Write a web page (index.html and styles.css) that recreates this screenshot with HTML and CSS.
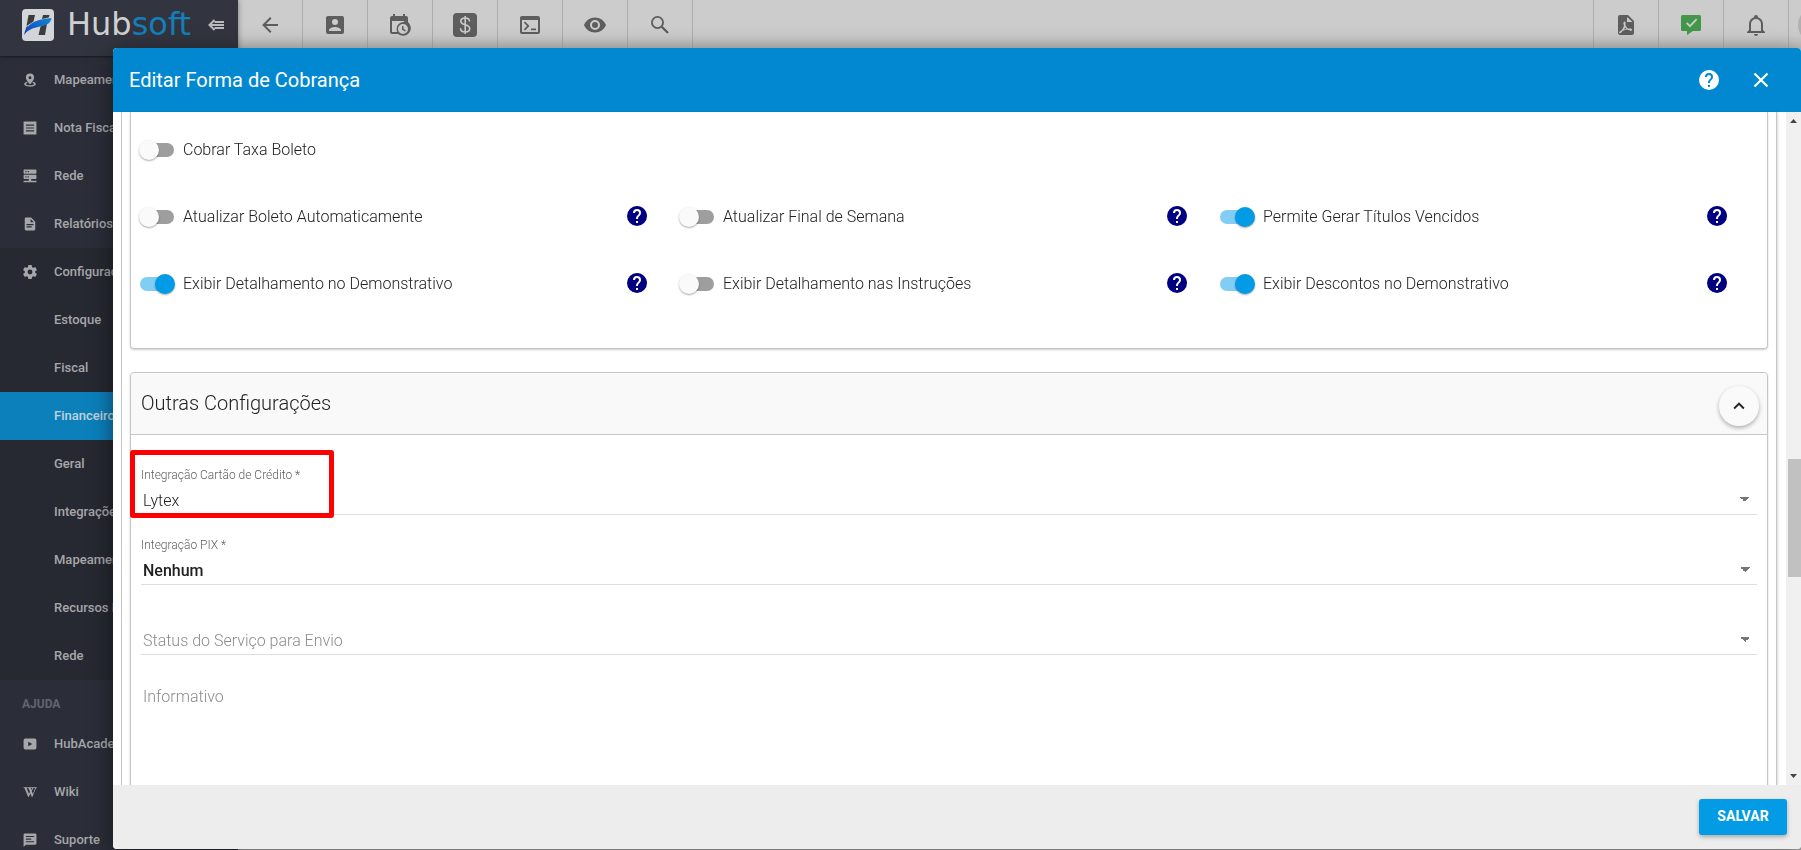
FILE: index.html
```html
<!DOCTYPE html>
<html lang="pt-BR">
<head>
<meta charset="utf-8">
<title>Hubsoft - Editar Forma de Cobrança</title>
<link rel="stylesheet" href="styles.css">
</head>
<body>
<svg class="defs" aria-hidden="true">
  <symbol id="help" viewBox="0 0 24 24"><path d="M15.07,11.25L14.17,12.17C13.45,12.89 13,13.5 13,15H11V14.5C11,13.39 11.45,12.39 12.17,11.67L13.41,10.41C13.78,10.05 14,9.55 14,9C14,7.89 13.1,7 12,7A2,2 0 0,0 10,9H8A4,4 0 0,1 12,5A4,4 0 0,1 16,9C16,9.88 15.64,10.67 15.07,11.25M13,19H11V17H13M12,2A10,10 0 0,0 2,12A10,10 0 0,0 12,22A10,10 0 0,0 22,12C22,6.47 17.5,2 12,2Z"/></symbol>
</svg>

<div class="app">
  <aside class="sidebar">
    <div class="brand">
      <svg class="brand-mark" viewBox="0 0 32 32">
        <defs><linearGradient id="wing" x1="0" y1="1" x2="1" y2="0"><stop offset="0" stop-color="#0a3fc4"/><stop offset="1" stop-color="#1689cf"/></linearGradient></defs>
        <rect width="32" height="32" rx="4" fill="#d3d5d8"/>
        <path fill="#3b3c3e" d="M6.500 6H13l-1.500 6.500L4.500 17zM21 6h6.500l-.700 2.500-6.800 1.500zM4 18.500l2.500-2-2 6-1.500 2zM18.500 17.500l6.500-3L23 26h-6.500z"/>
        <path fill="url(#wing)" d="M2 26C3.500 16.500 12 10 29.500 9c-.500 4-3.500 6.500-7.500 7.500C13.500 18.500 6.500 19.500 2 26z"/>
      </svg>
      <span class="brand-name">Hub<span class="brand-accent">soft</span></span>
      <button class="collapse" aria-label="Recolher menu"><svg viewBox="0 0 17 12"><path fill="none" stroke="currentColor" stroke-width="2" d="M6.500 1 1.500 6l5 5M2 6h14M6.500 3H16M6.500 9H16"/></svg></button>
    </div>
    <nav class="nav">
      <a class="item" href="#"><svg viewBox="0 0 24 24"><path d="M12 1a7 7 0 0 0-7 7c0 4.500 7 11.500 7 11.500S19 12.500 19 8a7 7 0 0 0-7-7m0 4.500A2.500 2.500 0 1 1 12 10.500 2.500 2.500 0 0 1 12 5.500M6.500 15C3.500 16 2 17.500 2 19c0 2.500 4.500 4.500 10 4.500s10-2 10-4.500c0-1.500-1.500-3-4.500-4l-1.300 2c1.800.500 2.800 1.200 2.800 2 0 1.200-3 2.200-7 2.200s-7-1-7-2.200c0-.800 1-1.500 2.800-2z"/></svg><span>Mapeamento</span></a>
      <a class="item" href="#"><svg viewBox="0 0 24 24"><path fill-rule="evenodd" d="M1 1h22v22H1zM5 6v2h14V6zm0 5v2h14v-2zm0 5v2h14v-2z"/></svg><span>Nota Fiscal</span></a>
      <a class="item" href="#"><svg viewBox="0 0 24 24"><path fill-rule="evenodd" d="M2 1h20a1 1 0 0 1 1 1v5a1 1 0 0 1-1 1H2a1 1 0 0 1-1-1V2a1 1 0 0 1 1-1m2 2.500v2h2v-2zm4 0v2h2v-2zM2 10h20a1 1 0 0 1 1 1v5a1 1 0 0 1-1 1h-8v3h9v2.500H1V20h9v-3H2a1 1 0 0 1-1-1v-5a1 1 0 0 1 1-1m2 2.500v2h2v-2zm4 0v2h2v-2z"/></svg><span>Rede</span></a>
      <a class="item" href="#"><svg viewBox="0 0 24 24"><path d="M13,9H18.5L13,3.5V9M5,1H14L21,8V21A2,2 0 0,1 19,23H5C3.890,23 3,22.100 3,21V3C3,1.890 3.890,1 5,1M15,18V16H6V18H15M18,14V12H6V14H18Z"/></svg><span>Relatórios</span></a>
      <div class="group">
        <a class="item" href="#"><svg viewBox="2 2 20 20"><path d="M12,15.5A3.5,3.5 0 0,1 8.5,12A3.5,3.5 0 0,1 12,8.5A3.5,3.5 0 0,1 15.5,12A3.5,3.5 0 0,1 12,15.5M19.43,12.97C19.47,12.65 19.5,12.33 19.5,12C19.5,11.67 19.47,11.34 19.43,11L21.54,9.37C21.73,9.22 21.78,8.95 21.66,8.73L19.66,5.27C19.54,5.05 19.27,4.96 19.05,5.05L16.56,6.05C16.04,5.66 15.5,5.32 14.87,5.07L14.5,2.42C14.46,2.18 14.25,2 14,2H10C9.75,2 9.54,2.18 9.5,2.42L9.13,5.07C8.5,5.32 7.96,5.66 7.44,6.05L4.95,5.05C4.73,4.96 4.46,5.05 4.34,5.27L2.34,8.73C2.21,8.95 2.27,9.22 2.46,9.37L4.57,11C4.53,11.34 4.5,11.67 4.5,12C4.5,12.33 4.53,12.65 4.57,12.97L2.46,14.63C2.27,14.78 2.21,15.05 2.34,15.27L4.34,18.73C4.46,18.95 4.73,19.03 4.95,18.95L7.44,17.94C7.96,18.34 8.5,18.68 9.13,18.93L9.5,21.58C9.54,21.82 9.75,22 10,22H14C14.25,22 14.46,21.82 14.5,21.58L14.87,18.93C15.5,18.67 16.04,18.34 16.56,17.94L19.05,18.95C19.27,19.03 19.54,18.95 19.66,18.73L21.66,15.27C21.78,15.05 21.73,14.78 21.54,14.63L19.43,12.97Z"/></svg><span>Configurações</span></a>
        <a class="item sub" href="#"><span>Estoque</span></a>
        <a class="item sub" href="#"><span>Fiscal</span></a>
        <a class="item sub active" href="#"><span>Financeiro</span></a>
        <a class="item sub" href="#"><span>Geral</span></a>
        <a class="item sub" href="#"><span>Integrações</span></a>
        <a class="item sub" href="#"><span>Mapeamento</span></a>
        <a class="item sub" href="#"><span>Recursos Humanos</span></a>
        <a class="item sub" href="#"><span>Rede</span></a>
      </div>
      <h2 class="nav-title">AJUDA</h2>
      <a class="item" href="#"><svg viewBox="0 0 24 24"><path fill-rule="evenodd" d="M4 2.500h16a3 3 0 0 1 3 3v13a3 3 0 0 1-3 3H4a3 3 0 0 1-3-3v-13a3 3 0 0 1 3-3M9 8v8l7-4z"/></svg><span>HubAcademy</span></a>
      <a class="item" href="#"><svg viewBox="0 0 24 24"><path d="M1 4h7v1.300c-1.300.100-1.500.600-1.100 1.700l3.400 8.300L12 11.700 10 7C9.500 5.700 9.200 5.400 8.300 5.300V4h6.200v1.300c-1 .100-1.300.500-.900 1.500l.7 1.800.9-1.800c.5-1 .2-1.400-.8-1.500V4H19v1.300c-1.100.100-1.700.700-2.200 1.700L15 10.500l2 4.800L20.200 7c.5-1.200.2-1.600-1.200-1.700V4h4.500v1.300c-1 .200-1.500.700-2 1.800L16 20.500h-.8l-2.500-6-3 6h-.8L3.400 7.100C2.900 5.800 2.300 5.400 1 5.300z"/></svg><span>Wiki</span></a>
      <a class="item" href="#"><svg viewBox="0 0 24 24"><path fill-rule="evenodd" d="M3 1h18a2 2 0 0 1 2 2v15a2 2 0 0 1-2 2H5l-4 4V3a2 2 0 0 1 2-2m2 4v2h14V5zm0 4.500v2h9v-2zM5 14v2h14v-2z"/></svg><span>Suporte</span></a>
    </nav>
  </aside>

  <header class="topbar">
    <button class="tool" aria-label="Voltar"><svg viewBox="0 0 24 24"><path d="M20,11V13H8L13.500,18.500L12.080,19.920L4.160,12L12.080,4.080L13.500,5.500L8,11H20Z"/></svg></button>
    <button class="tool" aria-label="Clientes"><svg viewBox="0 0 24 24"><path d="M6,17C6,15 10,13.9 12,13.9C14,13.9 18,15 18,17V18H6M15,9A3,3 0 0,1 12,12A3,3 0 0,1 9,9A3,3 0 0,1 12,6A3,3 0 0,1 15,9M3,5V19A2,2 0 0,0 5,21H19A2,2 0 0,0 21,19V5A2,2 0 0,0 19,3H5C3.89,3 3,3.9 3,5Z"/></svg></button>
    <button class="tool" aria-label="Agenda"><svg viewBox="0 0 24 24"><path fill-rule="evenodd" d="M5 1h2v2h8V1h2v2h1a2 2 0 0 1 2 2v4.100A7 7 0 1 1 10.100 21H4a2 2 0 0 1-2-2V5a2 2 0 0 1 2-2h1zM4 8v11h5.300A7 7 0 0 1 16 9V8zm11 3a5 5 0 1 0 0 10 5 5 0 0 0 0-10m-1 2h1.500v2.800l2.400 1.400-.8 1.300L14 16.700z"/></svg></button>
    <button class="tool" aria-label="Financeiro"><svg viewBox="0 0 24 24"><rect width="24" height="24" rx="4"/><path fill="none" stroke="#cbcbcb" stroke-width="1.600" d="M16.500 8.500C16.500 6.300 14.700 5 12.200 5S7.800 6.300 7.800 8.300c0 4.400 8.900 2.600 8.900 7.200 0 2.200-2 3.500-4.500 3.500s-4.700-1.300-4.700-3.700M12.200 3v18"/></svg></button>
    <button class="tool" aria-label="Console"><svg viewBox="0 0 24 24"><path fill-rule="evenodd" d="M4 3h16a2 2 0 0 1 2 2v14a2 2 0 0 1-2 2H4a2 2 0 0 1-2-2V5c0-1.100.900-2 2-2m0 4v12h16V7zm3 1.500L11.500 13 7 17.500 5.800 16.200 9 13 5.800 9.800zM13 15.500h5v1.800h-5z"/></svg></button>
    <button class="tool" aria-label="Visualizar"><svg viewBox="0 0 24 24"><path d="M12,9A3,3 0 0,0 9,12A3,3 0 0,0 12,15A3,3 0 0,0 15,12A3,3 0 0,0 12,9M12,17A5,5 0 0,1 7,12A5,5 0 0,1 12,7A5,5 0 0,1 17,12A5,5 0 0,1 12,17M12,4.5C7,4.5 2.73,7.61 1,12C2.73,16.39 7,19.5 12,19.5C17,19.5 21.27,16.39 23,12C21.27,7.61 17,4.5 12,4.5Z"/></svg></button>
    <button class="tool" aria-label="Pesquisar"><svg viewBox="0 0 24 24"><path fill="none" stroke="currentColor" stroke-width="1.800" d="M9.500 3.900a5.600 5.600 0 1 1 0 11.200 5.600 5.600 0 0 1 0-11.200M13.800 13.800l6 6"/><path d="M15 13.500l5.700 5.700-1.400 1.400-5.700-5.700z"/></svg></button>
    <div class="tools-right">
      <button class="tool" aria-label="PDF"><svg viewBox="0 0 24 24"><path fill-rule="evenodd" d="M14 2l6 6v12a2 2 0 0 1-2 2H6a2 2 0 0 1-2-2V4c0-1.100.900-2 2-2zm-1 2v5h5.500zM10.500 8.500c-1.300 0-1.300 2.300-.500 4.300-.700 2-1.700 3.600-2.400 4.400-2 .8-2.900 2-2.300 2.700.900 1 2.300-.2 3.400-2.200 1.700-.600 3.300-.9 4.700-1.100 2 1.200 4.100 1.600 4.700.6.500-1.200-.9-1.900-3.900-1.600-1.200-.8-2.200-2-2.800-3.300.4-1.800.4-3.800-.9-3.800m.6 5.700c.4.700.9 1.200 1.500 1.700l-2.400.5z"/></svg></button>
      <button class="tool ok" aria-label="Status"><svg viewBox="0 0 24 24"><path fill-rule="evenodd" d="M3.500 2h17A1.500 1.500 0 0 1 22 3.500v13a1.500 1.500 0 0 1-1.500 1.500H14l-6 4v-4H3.500A1.500 1.500 0 0 1 2 16.500v-13A1.500 1.500 0 0 1 3.500 2M17 5.500l-6 6.300-2.800-2.600L7 10.500l4 4 7.300-7.700z"/></svg></button>
      <button class="tool" aria-label="Notificações"><svg viewBox="0 0 24 24"><path d="M10,21H14A2,2 0 0,1 12,23A2,2 0 0,1 10,21M21,19V20H3V19L5,17V11C5,7.900 7.030,5.170 10,4.290V4A2,2 0 0,1 14,4V4.290C16.970,5.170 19,7.900 19,11V17L21,19M17,11A5,5 0 0,0 7,11V18H17V11Z"/></svg></button>
      <span class="avatar-slot"><span class="avatar"></span></span>
    </div>
  </header>
</div>

<section class="dialog" role="dialog" aria-labelledby="dialog-title">
  <header class="dialog-head">
    <h1 id="dialog-title">Editar Forma de Cobrança</h1>
    <button class="head-btn" aria-label="Ajuda"><svg viewBox="0 0 24 24"><use href="#help"/></svg></button>
    <button class="head-btn" aria-label="Fechar"><svg viewBox="0 0 24 24"><path fill="none" stroke="currentColor" stroke-width="2.200" d="M5.500 5.500l13 13M18.500 5.500l-13 13"/></svg></button>
  </header>

  <div class="dialog-body">
    <form class="form" id="form">
      <div class="panel panel-toggles">
        <div class="toggles">
          <div class="cell full"><label class="toggle"><input type="checkbox"><span>Cobrar Taxa Boleto</span></label></div>
          <div class="cell"><label class="toggle"><input type="checkbox"><span>Atualizar Boleto Automaticamente</span></label><svg class="hint" viewBox="0 0 24 24"><use href="#help"/></svg></div>
          <div class="cell"><label class="toggle"><input type="checkbox"><span>Atualizar Final de Semana</span></label><svg class="hint" viewBox="0 0 24 24"><use href="#help"/></svg></div>
          <div class="cell"><label class="toggle"><input type="checkbox" checked><span>Permite Gerar Títulos Vencidos</span></label><svg class="hint" viewBox="0 0 24 24"><use href="#help"/></svg></div>
          <div class="cell"><label class="toggle"><input type="checkbox" checked><span>Exibir Detalhamento no Demonstrativo</span></label><svg class="hint" viewBox="0 0 24 24"><use href="#help"/></svg></div>
          <div class="cell"><label class="toggle"><input type="checkbox"><span>Exibir Detalhamento nas Instruções</span></label><svg class="hint" viewBox="0 0 24 24"><use href="#help"/></svg></div>
          <div class="cell"><label class="toggle"><input type="checkbox" checked><span>Exibir Descontos no Demonstrativo</span></label><svg class="hint" viewBox="0 0 24 24"><use href="#help"/></svg></div>
        </div>
      </div>

      <div class="panel panel-other">
        <div class="panel-head">
          <h2>Outras Configurações</h2>
          <button type="button" class="fab" aria-label="Recolher"><svg viewBox="0 0 24 24"><path d="M7.410,15.410L12,10.830L16.590,15.410L18,14L12,8L6,14L7.410,15.410Z"/></svg></button>
        </div>
        <div class="fields">
          <div class="field">
            <label for="card">Integração Cartão de Crédito *</label>
            <select id="card"><option>Lytex</option></select>
            <span class="highlight"></span>
          </div>
          <div class="field">
            <label for="pix">Integração PIX *</label>
            <select id="pix" class="strong"><option>Nenhum</option></select>
          </div>
          <div class="field">
            <select id="status" class="empty" aria-label="Status do Serviço para Envio"><option>Status do Serviço para Envio</option></select>
          </div>
          <textarea class="info" aria-label="Informativo" placeholder="Informativo"></textarea>
        </div>
      </div>
    </form>
    <div class="scroll" aria-hidden="true">
      <svg viewBox="0 0 7 4"><path d="M0 4 3.500 0 7 4z"/></svg>
      <div class="track"><div class="thumb"></div></div>
      <svg viewBox="0 0 7 4"><path d="M0 0h7L3.500 4z"/></svg>
    </div>
  </div>

  <footer class="dialog-foot"><button class="save" form="form">SALVAR</button></footer>
</section>
</body>
</html>
```
FILE: styles.css
```css
* { box-sizing: border-box; }

body {
  margin: 0;
  height: 100vh;
  overflow: hidden;
  font-family: Roboto, "Open Sans", sans-serif;
  color: #212121;
  background: #b5b5b5;
}

button {
  border: 0;
  padding: 0;
  background: none;
  font: inherit;
  color: inherit;
}

svg { fill: currentColor; display: block; flex: none; }
.defs { display: none; }
h1, h2 { margin: 0; }

/* Application shell, dimmed behind the dialog */
.app {
  display: grid;
  grid-template-columns: 238px 1fr;
  height: 100vh;
}

.sidebar {
  background: #2b2e39;
  color: #a6a7aa;
  overflow: hidden;
  box-shadow: 0 0 6px rgba(0, 0, 0, .4);
  z-index: 1;
}

.brand {
  display: flex;
  align-items: center;
  height: 56px;
  padding: 0 13px 6px 22px;
  background: #32353f;
  box-shadow: 0 1px 2px rgba(0, 0, 0, .5);
}
.brand-mark { width: 32px; height: 32px; }
.brand-name {
  flex: 1;
  padding: 0 0 2px 13px;
  font: 400 32px/48px "DejaVu Sans", sans-serif;
  color: #cfd0d2;
}
.brand-accent { color: #147fb8; }
.collapse { color: #b9babd; }
.collapse svg { width: 17px; height: 12px; }

.item {
  display: flex;
  align-items: center;
  gap: 17px;
  height: 48px;
  padding-left: 23px;
  font-size: 13px;
  font-weight: 500;
  color: inherit;
  text-decoration: none;
  white-space: nowrap;
}
.item span { padding-bottom: 2px; }
.item svg { width: 14px; height: 14px; }
.group { background: #262931; }
.item.sub { padding-left: 54px; }
.active { background: #0b80bb; color: #c3d3dc; }
.nav-title {
  height: 40px;
  padding-left: 22px;
  font-size: 12px;
  font-weight: 700;
  line-height: 48px;
  color: #63656d;
}

.topbar {
  display: flex;
  height: 50px;
  background: linear-gradient(#cccccc 70%, #bcbcbc);
  color: #5e5e5e;
}
.tool {
  display: flex;
  align-items: center;
  justify-content: center;
  width: 65px;
  height: 50px;
  border-right: 1px solid #adadad;
}
.tool svg { width: 24px; height: 24px; }
.ok { color: #43974a; }
.tools-right {
  display: flex;
  margin-left: auto;
  border-left: 1px solid #adadad;
}
.avatar-slot {
  display: flex;
  align-items: center;
  width: 12px;
  padding-left: 9px;
  overflow: hidden;
}
.avatar {
  flex: none;
  width: 36px;
  height: 36px;
  border-radius: 50%;
  background: #b0b0b0;
}

/* Dialog */
.dialog {
  position: fixed;
  inset: 48px 0 1px 113px;
  display: flex;
  flex-direction: column;
  border-radius: 4px;
  overflow: hidden;
  background: #fff;
  box-shadow: 0 6px 24px rgba(0, 0, 0, .5);
  z-index: 2;
}
.dialog-head {
  display: flex;
  align-items: center;
  flex: none;
  gap: 28px;
  height: 64px;
  padding: 0 28px 0 16px;
  background: #0288d1;
  color: #fff;
}
.dialog-head h1 {
  flex: 1;
  font-size: 20px;
  font-weight: 400;
}
.head-btn svg { width: 24px; height: 24px; }

.dialog-body {
  display: flex;
  flex: 1;
  min-height: 0;
}
.form {
  flex: 1;
  margin: 0 9px 0 8px;
  padding: 0 8px;
  border: solid #c6c6c6;
  border-width: 0 1px;
  box-shadow: 1px 0 2px rgba(0, 0, 0, .15);
  overflow: hidden;
}
.panel {
  border: 1px solid #c6c6c6;
  border-radius: 4px;
  box-shadow: 0 1px 2px rgba(0, 0, 0, .2);
}
.panel-toggles {
  padding: 4px 8px 31px;
  border-top: 0;
  border-radius: 0 0 4px 4px;
}
.toggles {
  display: grid;
  grid-template-columns: repeat(3, 1fr);
}
.cell {
  display: flex;
  align-items: center;
  justify-content: space-between;
  height: 67px;
  padding-right: 30px;
}
.full { grid-column: 1 / -1; }
.toggle {
  display: flex;
  align-items: center;
  gap: 8px;
  font-size: 16px;
  font-weight: 300;
}
.toggle input {
  appearance: none;
  position: relative;
  display: flex;
  align-items: center;
  width: 36px;
  height: 20px;
  margin: 0;
}
.toggle input::before {
  content: "";
  flex: 1;
  height: 14px;
  margin: 0 1px;
  border-radius: 7px;
  background: #9e9e9e;
}
.toggle input::after {
  content: "";
  position: absolute;
  left: 0;
  top: 0;
  width: 20px;
  height: 20px;
  border-radius: 50%;
  background: #fafafa;
  box-shadow: 0 1px 2px rgba(0, 0, 0, .35);
}
.toggle input:checked::before { background: #82cdf3; }
.toggle input:checked::after {
  left: auto;
  right: 0;
  background: #039be5;
}
.hint { width: 24px; height: 24px; margin-bottom: 2px; color: #000080; }

.panel-other { margin-top: 23px; height: 600px; }
.panel-head {
  display: flex;
  align-items: center;
  justify-content: space-between;
  height: 62px;
  padding: 0 8px 0 10px;
  border-bottom: 1px solid #c6c6c6;
  border-radius: 4px 4px 0 0;
  background: #f9f9f9;
}
.panel-head h2 {
  padding-bottom: 2px;
  font-size: 20px;
  font-weight: 300;
}
.fab {
  display: flex;
  align-items: center;
  justify-content: center;
  width: 40px;
  height: 40px;
  margin-top: 4px;
  border-radius: 50%;
  background: #fafafa;
  box-shadow: 0 2px 4px rgba(0, 0, 0, .3);
}
.fab svg { width: 22px; height: 22px; }

.fields { padding: 10px 10px 0; }
.field {
  position: relative;
  display: flex;
  flex-direction: column;
  justify-content: flex-end;
  height: 70px;
  border-bottom: 1px solid #dedede;
}
.field label {
  font-size: 12px;
  font-weight: 300;
  line-height: 16px;
  color: #5f5f5f;
}
.field select {
  appearance: none;
  width: 100%;
  height: 31px;
  margin: 0;
  padding: 6px 2px 1px;
  border: 0;
  border-radius: 0;
  background:
    linear-gradient(to bottom left, #757575 50%, transparent 50%) right 12px top 14px / 5px 5px no-repeat,
    linear-gradient(to bottom right, #757575 50%, transparent 50%) right 7px top 14px / 5px 5px no-repeat;
  font: 300 16px/24px Roboto, sans-serif;
  color: #212121;
}
.field select.strong { font-weight: 500; }
.field select.empty { color: #8c8c8c; }
.highlight {
  position: absolute;
  left: -11px;
  bottom: -4px;
  width: 204px;
  height: 68px;
  border: 5px solid #fe0000;
  border-radius: 3px;
  pointer-events: none;
}
.info {
  display: block;
  width: 100%;
  height: 160px;
  margin-top: 30px;
  padding: 0 2px;
  border: 0;
  resize: none;
  background: none;
  font: 300 16px/24px Roboto, sans-serif;
}
.info::placeholder { color: #8c8c8c; }

.scroll {
  display: flex;
  flex-direction: column;
  align-items: center;
  justify-content: space-between;
  width: 15px;
  padding: 7px 0;
  background: #f0f0f0;
}
.scroll svg { width: 7px; height: 4px; color: #444; }
.track {
  flex: 1;
  align-self: stretch;
  margin: 6px 0;
  padding: 330px 0 0 2px;
}
.thumb { height: 118px; background: #c1c1c1; }

.dialog-foot {
  display: flex;
  align-items: center;
  justify-content: flex-end;
  flex: none;
  height: 64px;
  padding-right: 14px;
  background: #ededed;
}
.save {
  width: 88px;
  height: 36px;
  padding-bottom: 2px;
  border-radius: 3px;
  background: #039be5;
  color: #fff;
  font-size: 14px;
  font-weight: 700;
  box-shadow: 0 2px 4px rgba(0, 0, 0, .3);
}
```
